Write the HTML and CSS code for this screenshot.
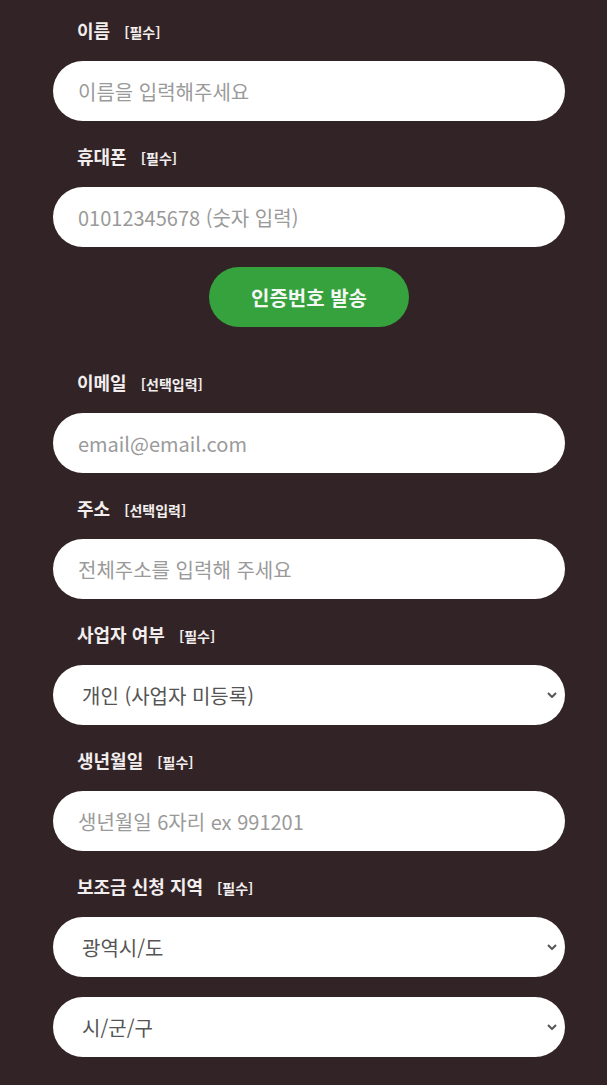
FILE: index.html
```html
<!DOCTYPE html>
<html lang="ko">

<head>
    <meta charset="UTF-8">
    <meta name="viewport" content="width=device-width, initial-scale=1.0">
    <title>신청서</title>
    <link rel="stylesheet" href="styles.css">
</head>

<body>
    <form class="form">
        <div class="field">
            <label class="label">이름 <span class="tag">[필수]</span></label>
            <input class="input" type="text" placeholder="이름을 입력해주세요">
        </div>

        <div class="field">
            <label class="label">휴대폰 <span class="tag">[필수]</span></label>
            <input class="input" type="tel" placeholder="01012345678 (숫자 입력)">
            <button class="btn" type="button">인증번호 발송</button>
        </div>

        <div class="field">
            <label class="label">이메일 <span class="tag">[선택입력]</span></label>
            <input class="input" type="email" placeholder="email@email.com">
        </div>

        <div class="field">
            <label class="label">주소 <span class="tag">[선택입력]</span></label>
            <input class="input" type="text" placeholder="전체주소를 입력해 주세요">
        </div>

        <div class="field">
            <label class="label">사업자 여부 <span class="tag">[필수]</span></label>
            <div class="select-wrap">
                <select class="select">
                    <option>개인 (사업자 미등록)</option>
                    <option>개인사업자</option>
                    <option>법인사업자</option>
                </select>
                <svg class="chevron" viewBox="0 0 10 6"><path d="M1 1l4 4 4-4"/></svg>
            </div>
        </div>

        <div class="field">
            <label class="label">생년월일 <span class="tag">[필수]</span></label>
            <input class="input" type="text" placeholder="생년월일 6자리 ex 991201">
        </div>

        <div class="field">
            <label class="label">보조금 신청 지역 <span class="tag">[필수]</span></label>
            <div class="stack">
                <div class="select-wrap">
                    <select class="select">
                        <option>광역시/도</option>
                    </select>
                    <svg class="chevron" viewBox="0 0 10 6"><path d="M1 1l4 4 4-4"/></svg>
                </div>
                <div class="select-wrap">
                    <select class="select">
                        <option>시/군/구</option>
                    </select>
                    <svg class="chevron" viewBox="0 0 10 6"><path d="M1 1l4 4 4-4"/></svg>
                </div>
            </div>
        </div>
    </form>
</body>

</html>
```

FILE: styles.css
```css
body {
    background-color: #322426;
    margin: 0;
    font-family: "Noto Sans CJK KR", "Noto Sans", sans-serif;
}

.form {
    padding: 13px 42px 0 53px;
}

.field {
    display: flex;
    flex-direction: column;
    margin-bottom: 18px;
}

.label {
    height: 34px;
    line-height: 34px;
    margin-bottom: 14px;
    padding-left: 24px;
    color: #f3eeee;
    font-size: 18px;
    font-weight: 700;
}

.tag {
    margin-left: 9px;
    font-size: 14px;
}

.input,
.select {
    box-sizing: border-box;
    width: 100%;
    height: 60px;
    border: none;
    border-radius: 30px;
    background: #fff;
    font-family: inherit;
    font-size: 20px;
    outline: none;
}

.input {
    padding: 0 25px;
    color: #444;
}

.input::placeholder {
    color: #9a9a9a;
}

.select-wrap {
    position: relative;
}

.select {
    appearance: none;
    padding: 0 30px 0 29px;
    color: #555;
}

.chevron {
    position: absolute;
    top: 27px;
    right: 8px;
    width: 10px;
    height: 6px;
    fill: none;
    stroke: #555;
    stroke-width: 2;
    pointer-events: none;
}

.stack {
    display: flex;
    flex-direction: column;
    gap: 20px;
}

.btn {
    align-self: center;
    width: 200px;
    height: 60px;
    margin: 20px 0;
    border: none;
    border-radius: 30px;
    background: #35a23d;
    color: #f4f7f4;
    font-family: inherit;
    font-size: 20px;
    font-weight: 700;
    cursor: pointer;
}
```
